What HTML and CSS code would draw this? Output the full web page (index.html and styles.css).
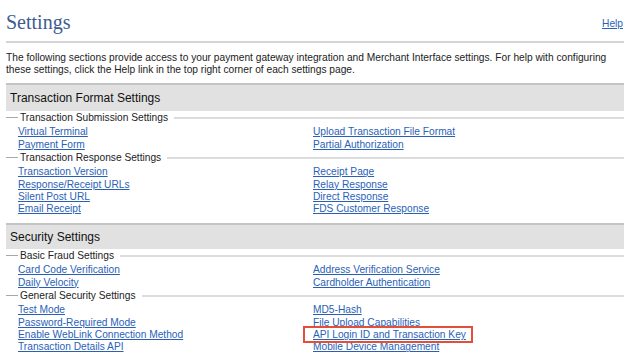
FILE: index.html
```html
<!DOCTYPE html>
<html>
<head>
  <title>Settings</title>
<meta name="viewport" content="width=device-width, initial-scale=1">
<link rel="stylesheet" href="styles.css">
</head>
<body>
<div class="page">
  <div class="top">
    <h1>Settings</h1>
    <a class="help" href="#">Help</a>
  </div>
  <hr>
  <p class="intro">The following sections provide access to your payment gateway integration and Merchant Interface settings. For help with configuring these settings, click the Help link in the top right corner of each settings page.</p>

  <div class="section">
    <div class="bar">Transaction Format Settings</div>
    <div class="group">
      <div class="legend"><span>Transaction Submission Settings</span></div>
      <div class="links">
        <ul>
          <li><a href="#">Virtual Terminal</a></li>
          <li><a href="#">Payment Form</a></li>
        </ul>
        <ul>
          <li><a href="#">Upload Transaction File Format</a></li>
          <li><a href="#">Partial Authorization</a></li>
        </ul>
      </div>
    </div>
    <div class="group">
      <div class="legend"><span>Transaction Response Settings</span></div>
      <div class="links">
        <ul>
          <li><a href="#">Transaction Version</a></li>
          <li><a href="#">Response/Receipt URLs</a></li>
          <li><a href="#">Silent Post URL</a></li>
          <li><a href="#">Email Receipt</a></li>
        </ul>
        <ul>
          <li><a href="#">Receipt Page</a></li>
          <li><a href="#">Relay Response</a></li>
          <li><a href="#">Direct Response</a></li>
          <li><a href="#">FDS Customer Response</a></li>
        </ul>
      </div>
    </div>
  </div>

  <div class="section">
    <div class="bar">Security Settings</div>
    <div class="group">
      <div class="legend"><span>Basic Fraud Settings</span></div>
      <div class="links">
        <ul>
          <li><a href="#">Card Code Verification</a></li>
          <li><a href="#">Daily Velocity</a></li>
        </ul>
        <ul>
          <li><a href="#">Address Verification Service</a></li>
          <li><a href="#">Cardholder Authentication</a></li>
        </ul>
      </div>
    </div>
    <div class="group">
      <div class="legend"><span>General Security Settings</span></div>
      <div class="links">
        <ul>
          <li><a href="#">Test Mode</a></li>
          <li><a href="#">Password-Required Mode</a></li>
          <li><a href="#">Enable WebLink Connection Method</a></li>
          <li><a href="#">Transaction Details API</a></li>
        </ul>
        <ul>
          <li><a href="#">MD5-Hash</a></li>
          <li><a href="#">File Upload Capabilities</a></li>
          <li><a class="marked" href="#">API Login ID and Transaction Key</a></li>
          <li><a href="#">Mobile Device Management</a></li>
        </ul>
      </div>
    </div>
  </div>
</div>
</body>
</html>
```

FILE: styles.css
```css
body {
  margin: 0;
  font-family: "Liberation Sans", Arial, sans-serif;
  font-size: 10.2px;
  color: #222;
  background: white;
  overflow: hidden;
}

.page {
  padding-left: 6px;
}

a {
  color: #2a5fb8;
}

.top {
  display: flex;
  justify-content: space-between;
  align-items: center;
  padding-top: 10px;
}

.top h1 {
  margin: 0;
  font-family: "Liberation Serif", "Times New Roman", serif;
  font-weight: normal;
  font-size: 20px;
  line-height: 24px;
  color: #3b5d91;
}

.help {
  font-size: 10.2px;
  margin-top: 2px;
  margin-right: 1px;
}

hr {
  border: 0;
  border-top: 2px solid #d4d4d4;
  margin: 7px 0 0 0;
}

.intro {
  margin: 9px 0 6px 0;
  line-height: 12.4px;
  padding-right: 8px;
}

.bar {
  background: #e1e1e1;
  border-top: 2px solid #c4c4c4;
  height: 26px;
  line-height: 26px;
  font-size: 12px;
  padding-left: 4px;
  color: #111;
}

.section + .section {
  margin-top: 7px;
}

.section + .section .bar {
  height: 24px;
  line-height: 24px;
}

.group:first-of-type {
  margin-top: 1px;
}

.legend {
  display: flex;
  align-items: center;
  line-height: 14px;
  margin-bottom: 1.5px;
}

.legend::before {
  content: "";
  width: 12px;
  border-top: 1px solid #a8a8a8;
  margin-right: 2px;
}

.legend::after {
  content: "";
  flex: 1;
  border-top: 2px solid #dcdcdc;
  margin-left: 6px;
}

.links {
  display: grid;
  grid-template-columns: 295px 1fr;
  padding-left: 12px;
}

.links ul {
  list-style: none;
  margin: 0;
  padding: 0;
}

.links li {
  line-height: 12.33px;
}

.marked {
  outline: 2px solid #e2503c;
  padding: 1px 5px 1px 8px;
  margin-left: -8px;
}
```
